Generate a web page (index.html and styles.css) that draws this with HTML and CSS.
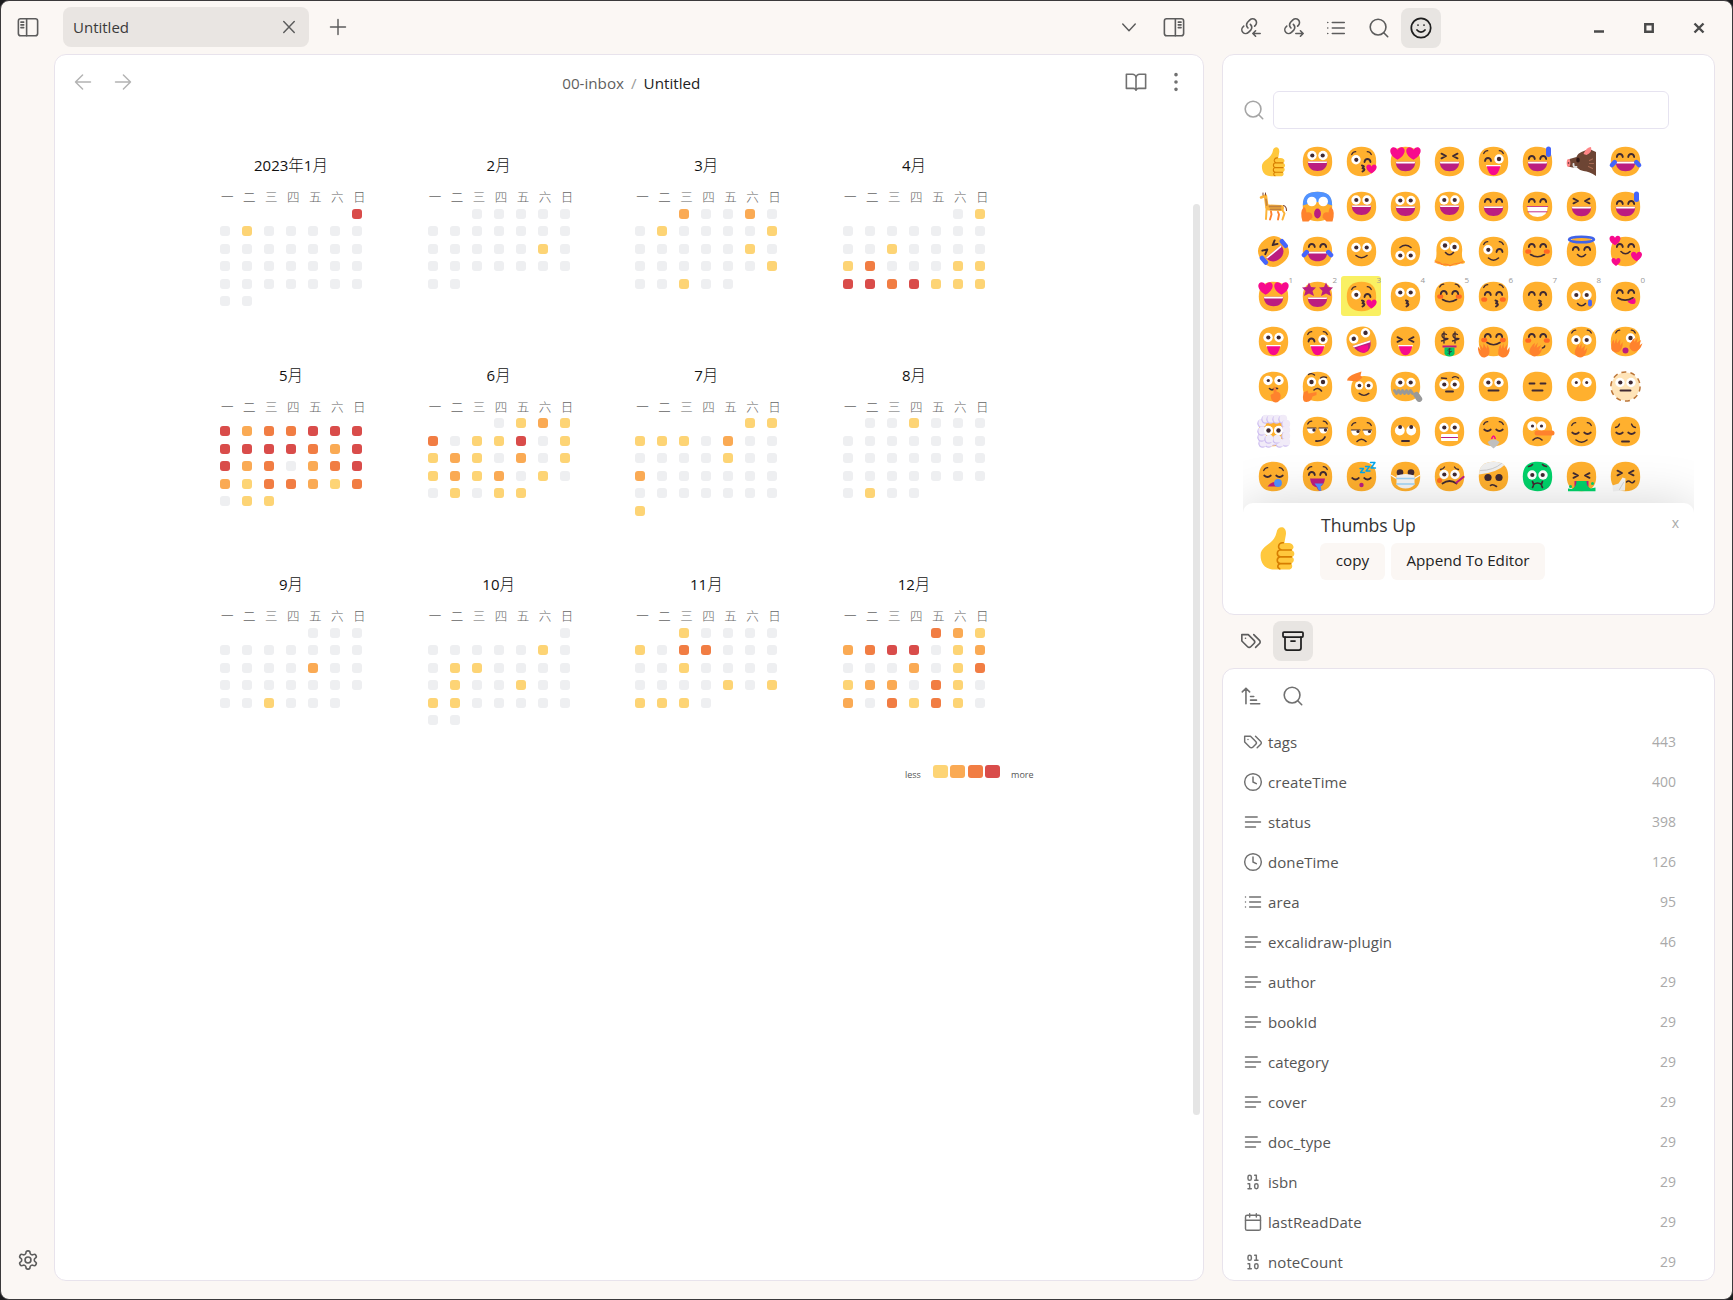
FILE: index.html
```html
<!DOCTYPE html>
<html lang="en">
<head>
<meta charset="utf-8">
<title>Untitled</title>
<link rel="stylesheet" href="styles.css">
</head>
<body>
<svg class="sprite" width="0" height="0">
  <symbol id="i-search" viewBox="0 0 24 24"><circle cx="11" cy="11" r="8.6"/><path d="m21.5 21.5-4.3-4.3"/></symbol>
  <symbol id="i-tags" viewBox="0 0 24 24"><path d="M9 5H2v7l6.29 6.29c.94.94 2.48.94 3.42 0l3.58-3.58c.94-.94.94-2.48 0-3.42L9 5Z"/><path d="M6 9.01V9"/><path d="m15 5 6.3 6.3a2.4 2.4 0 0 1 0 3.4L17 19"/></symbol>
  <symbol id="i-clock" viewBox="0 0 24 24"><circle cx="12" cy="12" r="10"/><path d="M12 6v6l4 2"/></symbol>
  <symbol id="i-text" viewBox="0 0 24 24"><path d="M17 6H3M21 12H3M15 18H3"/></symbol>
  <symbol id="i-list" viewBox="0 0 24 24"><path d="M8 6h13M8 12h13M8 18h13M3 6h.01M3 12h.01M3 18h.01"/></symbol>
  <symbol id="i-binary" viewBox="0 0 24 24"><rect x="14" y="14" width="4" height="6" rx="2"/><rect x="6" y="4" width="4" height="6" rx="2"/><path d="M6 20h4M14 10h4M6 14h2v6M14 4h2v6"/></symbol>
  <symbol id="i-calendar" viewBox="0 0 24 24"><rect x="3" y="4" width="18" height="18" rx="2"/><path d="M16 2v4M8 2v4M3 10h18"/></symbol>
  <symbol id="i-link" viewBox="0 0 24 24"><path d="M8.7 12a4.9 4.9 0 0 1-.45-6.3l2.55-2.52a4.2 4.2 0 0 1 6 5.92l-.9.9"/><path d="M11.3 8a4.9 4.9 0 0 1 .45 6.3L9.2 16.82a4.2 4.2 0 0 1-6-5.92l.9-.9"/></symbol>
</svg>

<div class="window">
  <aside class="ribbon">
    <svg class="icon ic22" viewBox="0 0 24 24"><rect x="1.5" y="3" width="21" height="18.5" rx="2.5"/><path d="M10.5 3v18.5M4.3 6.7h3M4.3 9.7h3M4.3 12.7h3"/></svg>
    <svg class="icon ic22" viewBox="0 0 24 24"><path d="M12.22 2h-.44a2 2 0 0 0-2 2v.18a2 2 0 0 1-1 1.73l-.43.25a2 2 0 0 1-2 0l-.15-.08a2 2 0 0 0-2.73.73l-.22.38a2 2 0 0 0 .73 2.73l.15.1a2 2 0 0 1 1 1.72v.51a2 2 0 0 1-1 1.74l-.15.09a2 2 0 0 0-.73 2.73l.22.38a2 2 0 0 0 2.73.73l.15-.08a2 2 0 0 1 2 0l.43.25a2 2 0 0 1 1 1.73V20a2 2 0 0 0 2 2h.44a2 2 0 0 0 2-2v-.18a2 2 0 0 1 1-1.73l.43-.25a2 2 0 0 1 2 0l.15.08a2 2 0 0 0 2.73-.73l.22-.39a2 2 0 0 0-.73-2.73l-.15-.08a2 2 0 0 1-1-1.74v-.5a2 2 0 0 1 1-1.74l.15-.09a2 2 0 0 0 .73-2.73l-.22-.38a2 2 0 0 0-2.73-.73l-.15.08a2 2 0 0 1-2 0l-.43-.25a2 2 0 0 1-1-1.73V4a2 2 0 0 0-2-2z"/><circle cx="12" cy="12" r="3.2"/></svg>
  </aside>

  <main class="center">
    <div class="tabbar">
      <div class="tab"><span>Untitled</span><svg class="icon ic20" viewBox="0 0 24 24"><path d="M18.3 5.5 5.7 18.5M5.7 5.5l12.6 13"/></svg></div>
      <svg class="icon ic20 plus" viewBox="0 0 24 24"><path d="M12 3v18M3 12h18"/></svg>
      <svg class="icon ic20 chev" viewBox="0 0 24 24"><path d="m4.5 8.5 7.5 8 7.5-8"/></svg>
      <svg class="icon ic22" viewBox="0 0 24 24"><rect x="1.5" y="3" width="21" height="18.5" rx="2.5"/><path d="M13.5 3v18.5M16.7 6.7h3M16.7 9.7h3M16.7 12.7h3"/></svg>
    </div>
    <section class="panel note">
      <header class="note-head">
        <svg class="icon ic20 faint" viewBox="0 0 24 24"><path d="M11.5 3.5 3 12l8.5 8.5M21 12H3"/></svg>
        <svg class="icon ic20 faint" viewBox="0 0 24 24"><path d="m12.5 3.5 8.5 8.5-8.5 8.5M3 12h18"/></svg>
        <div class="crumbs"><span class="dir">00-inbox</span><span class="sep">/</span><span>Untitled</span></div>
        <svg class="icon ic22 mid" viewBox="0 0 24 24"><path d="M1.5 3.5H8a4 4 0 0 1 4 4V21a3 3 0 0 0-3-2H1.5zM22.500 3.500H16a4 4 0 0 0-4 4V21a3 3 0 0 1 3-2h7.500z"/></svg>
        <svg class="icon ic22 mid dots" viewBox="0 0 24 24"><circle cx="12" cy="12" r="1.100"/><circle cx="12" cy="4" r="1.100"/><circle cx="12" cy="20" r="1.100"/></svg>
      </header>
      <div class="note-body">
        <div class="year" id="year"></div>
        <div class="scroll"></div>
      </div>
      <div class="legend"><span>less</span><div class="keys"><i class="l1"></i><i class="l2"></i><i class="l3"></i><i class="l4"></i></div><span>more</span></div>
    </section>
  </main>

  <aside class="side">
    <div class="sidebar-tabs">
      <div class="btn"><svg class="icon ic22" viewBox="0 0 24 24"><use href="#i-link"/><path d="m17 21-3-3 3-3M22 18h-8"/></svg></div>
      <div class="btn"><svg class="icon ic22" viewBox="0 0 24 24"><use href="#i-link"/><path d="m19 15 3 3-3 3M14 18h8"/></svg></div>
      <div class="btn"><svg class="icon ic22"><use href="#i-list"/></svg></div>
      <div class="btn"><svg class="icon ic22"><use href="#i-search"/></svg></div>
      <div class="btn on"><svg class="icon ic24" viewBox="0 0 24 24"><circle cx="12" cy="12" r="9.700"/><path d="M8 14s1.500 2 4 2 4-2 4-2M9 9h.01M15 9h.01"/></svg></div>
      <div class="wincontrols">
        <svg width="12" height="12" viewBox="0 0 12 12"><path d="M1 9.500h10"/></svg>
        <svg width="12" height="12" viewBox="0 0 12 12"><path d="M2.250 2.250h7.500v7.500h-7.500z"/></svg>
        <svg width="12" height="12" viewBox="0 0 12 12"><path d="m1.500 1.500 9 9M10.500 1.500l-9 9"/></svg>
      </div>
    </div>

    <section class="panel picker">
      <div class="search"><svg class="icon ic22"><use href="#i-search"/></svg><div class="field"></div></div>
      <div class="picker-body">
        <div class="emojis" id="emojis"></div>
        <div class="detail">
          <svg class="thumb" id="thumb" viewBox="-12 -15 24 30"></svg>
          <div class="detail-main">
            <div class="name">Thumbs Up</div>
            <div class="actions"><button>copy</button><button class="wide">Append To Editor</button></div>
          </div>
          <span class="close">x</span>
        </div>
      </div>
    </section>

    <div class="sidebar-tabs low">
      <div class="btn"><svg class="icon ic22"><use href="#i-tags"/></svg></div>
      <div class="btn on"><svg class="icon ic24" viewBox="0 0 24 24"><rect x="2" y="3" width="20" height="5" rx="1"/><path d="M4 8v11a2 2 0 0 0 2 2h12a2 2 0 0 0 2-2V8M10 12h4"/></svg></div>
    </div>

    <section class="panel props">
      <div class="props-tools">
        <svg class="icon ic22 mid" viewBox="0 0 24 24"><path d="m2.500 7.500 4-4 4 4M6.500 3.500v17M11.500 12.500h3.500M11.500 16.500h6.500M11.500 20.500h10"/></svg>
        <svg class="icon ic22 mid"><use href="#i-search"/></svg>
      </div>
      <div class="row"><svg class="icon ic20 mid"><use href="#i-tags"/></svg><span>tags</span><b>443</b></div>
      <div class="row"><svg class="icon ic20 mid"><use href="#i-clock"/></svg><span>createTime</span><b>400</b></div>
      <div class="row"><svg class="icon ic20 mid"><use href="#i-text"/></svg><span>status</span><b>398</b></div>
      <div class="row"><svg class="icon ic20 mid"><use href="#i-clock"/></svg><span>doneTime</span><b>126</b></div>
      <div class="row"><svg class="icon ic20 mid"><use href="#i-list"/></svg><span>area</span><b>95</b></div>
      <div class="row"><svg class="icon ic20 mid"><use href="#i-text"/></svg><span>excalidraw-plugin</span><b>46</b></div>
      <div class="row"><svg class="icon ic20 mid"><use href="#i-text"/></svg><span>author</span><b>29</b></div>
      <div class="row"><svg class="icon ic20 mid"><use href="#i-text"/></svg><span>bookId</span><b>29</b></div>
      <div class="row"><svg class="icon ic20 mid"><use href="#i-text"/></svg><span>category</span><b>29</b></div>
      <div class="row"><svg class="icon ic20 mid"><use href="#i-text"/></svg><span>cover</span><b>29</b></div>
      <div class="row"><svg class="icon ic20 mid"><use href="#i-text"/></svg><span>doc_type</span><b>29</b></div>
      <div class="row"><svg class="icon ic20 mid"><use href="#i-binary"/></svg><span>isbn</span><b>29</b></div>
      <div class="row"><svg class="icon ic20 mid"><use href="#i-calendar"/></svg><span>lastReadDate</span><b>29</b></div>
      <div class="row"><svg class="icon ic20 mid"><use href="#i-binary"/></svg><span>noteCount</span><b>29</b></div>
    </section>
  </aside>
</div>
<script src="app.js"></script>
</body>
</html>
```

FILE: styles.css
```css
* { box-sizing: border-box; }
body { margin: 0; background: #1c1c1e; font-family: "Open Sans", "Noto Sans CJK SC", sans-serif; font-size: 15px; color: #222; overflow: hidden; }
.sprite { display: block; height: 0; }
.window { width: 1733px; height: 1300px; border: 1px solid #3b393b; border-radius: 9px; background: #fbf7f4; display: flex; padding: 0 17px 18px 0; overflow: hidden; }
.icon { fill: none; stroke: #5c5c5c; stroke-width: 1.75; stroke-linecap: round; stroke-linejoin: round; flex: none; display: block; }
.ic20 { width: 20px; height: 20px; }
.ic22 { width: 22px; height: 22px; }
.ic24 { width: 24px; height: 24px; }
.mid { stroke: #707070; }
.faint { stroke: #b3b3b3; }

.ribbon { width: 53px; padding: 15px 0 10px 15.500px; display: flex; flex-direction: column; justify-content: space-between; }
.center { width: 1150px; display: flex; flex-direction: column; }
.tabbar { height: 53px; display: flex; align-items: center; padding: 0 19px 2px 9px; }
.tab { width: 246px; height: 40px; margin-top: 1px; border-radius: 8px; background: #e9e5e2; display: flex; align-items: center; justify-content: space-between; padding: 0 10px; color: #3a3a3a; }
.plus { margin-left: 18.500px; }
.chev { margin-left: auto; margin-right: 24px; }

.panel { background: #fff; border: 1px solid #e8e3ec; border-radius: 12px; overflow: hidden; }
.note { flex: 1; }
.note-head { height: 56px; display: flex; align-items: center; padding: 0 16px 2px 17.500px; gap: 20px; }
.crumbs { flex: 1; display: flex; justify-content: center; gap: 7px; padding: 2px 0 0 5px; font-size: 15.200px; }
.crumbs .dir { color: #5f5f5f; }
.crumbs .sep { color: #9a9a9a; }
.dots { margin-left: -2px; }
.dots circle { fill: #707070; }
.note-body { height: 640px; display: flex; justify-content: space-between; padding: 41.2px 3px 0 159px; }
.year { display: grid; grid-template-columns: repeat(4, 154px); grid-auto-rows: 209.5px; column-gap: 53.67px; }
.month h3 { margin: 0; height: 35px; padding-top: 1px; line-height: 25px; font-size: 15.5px; font-weight: 300; text-align: center; color: #111; white-space: nowrap; }
.month h3 span { font-weight: 400; font-size: 15px; }
.week, .days { display: grid; grid-template-columns: repeat(7, 22px); }
.week { height: 17.800px; line-height: 20px; font-family: "Noto Sans CJK SC", sans-serif; font-weight: 300; font-size: 12.500px; color: #666; text-align: center; padding-left: 2.300px; }
.days { grid-auto-rows: 17.500px; place-items: center; }
.days.late { padding-top: 7.800px; }
.days i { width: 10px; height: 10px; border-radius: 3px; }
.l0 { background: #eeeff1; }
.l1 { background: #fdd475; }
.l2 { background: #faaa54; }
.l3 { background: #f17d43; }
.l4 { background: #d94c4a; }
.scroll { width: 7px; height: 911px; margin-top: 51.800px; border-radius: 4px; background: #e5e5e5; }
.legend { display: flex; align-items: flex-start; font-size: 9px; line-height: 12px; color: #555; padding-left: 850px; margin-top: 14px; }
.legend .keys { display: flex; gap: 2.400px; margin: 0 11px 0 12px; }
.legend i { width: 15px; height: 13px; border-radius: 3px; }
.legend span { padding-top: 4px; }

.side { width: 493px; margin-left: 18px; display: flex; flex-direction: column; }
.sidebar-tabs { height: 53px; display: flex; align-items: flex-start; padding: 7px 0 0 9px; gap: 2.600px; }
.btn { width: 40px; height: 40px; border-radius: 8px; display: flex; align-items: center; justify-content: center; }
.btn.on { background: #e8e5e2; }
.btn.on .icon { stroke: #1f1f1f; }
.wincontrols { margin: 14px 10px 0 auto; display: flex; gap: 38px; }
.wincontrols svg { fill: none; stroke: #4a4a4a; stroke-width: 2.400; display: block; }

.picker { height: 561px; padding-top: 36px; }
.search { display: flex; align-items: center; gap: 8px; padding-left: 20px; }
.search .icon { stroke: #a5a5a5; }
.field { width: 396px; height: 38px; border: 1px solid #e6e3f0; border-radius: 6px; }
.picker-body { width: 451px; margin-left: 20px; height: 485px; overflow: hidden; padding-top: 12px; }
.emojis { display: grid; grid-template-columns: repeat(9, 40px); grid-auto-rows: 40px; gap: 5px 4px; padding-left: 10px; }
.emoji { position: relative; border-radius: 3px; width: 40px; height: 40px; }
.emoji svg { width: 40px; height: 40px; display: block; }
.emoji.sel { background: #f9f063; }
.emoji small { position: absolute; right: 0; top: -1px; font-size: 8px; line-height: 9px; color: #999; }
.detail { position: relative; height: 130px; margin-top: 7px; background: #fff; border-radius: 10px 10px 0 0; box-shadow: 0 0 50px rgba(0, 0, 0, .17); display: flex; }
.thumb { width: 35px; height: 44px; margin: 23px 0 0 17px; }
.detail-main { margin-left: 25px; padding-top: 8px; }
.name { font-size: 17.600px; line-height: 28px; color: #333; padding-left: 1px; }
.actions { display: flex; gap: 6px; margin-top: 4px; }
button { width: 65px; height: 37px; border: 0; border-radius: 6px; background: #fbf7f4; font: 15.200px "Open Sans", sans-serif; color: #222; padding: 0 0 4px; }
button.wide { width: 154px; }
.close { margin: 10px 15px 0 auto; color: #aaa; font-size: 14px; line-height: 20px; }

.sidebar-tabs.low { height: 53px; padding: 6px 0 0 8.500px; }
.props { flex: 1; }
.props-tools { height: 53px; display: flex; align-items: center; gap: 20px; padding: 1px 0 0 17px; }
.row { height: 40px; display: flex; align-items: center; padding: 0 38px 0 20px; color: #555; }
.row span { margin-left: 5px; letter-spacing: .08px; }
.row b { margin-left: auto; font-weight: 400; color: #a9a9a9; font-size: 14px; padding-bottom: 2px; }
```

FILE: app.js
```js
// Activity calendar: one string per week, digit = level, dot = outside the month
const months = [
  ['<span>2023</span>年<span>1</span>月', '......4 0100000 0000000 0000000 0000000 00'],
  ['<span>2</span>月', '..00000 0000000 0000010 0000000 00'],
  ['<span>3</span>月', '..20020 0100001 0000010 0000001 00100'],
  ['<span>4</span>月', '.....01 0000000 0010000 1300011 4434111'],
  ['<span>5</span>月', '4233444 4444324 4230234 2133213 011'],
  ['<span>6</span>月', '...0121 3011401 1210201 1212010 01011'],
  ['<span>7</span>月', '.....11 1110200 0000100 2000000 0000000 1'],
  ['<span>8</span>月', '.001000 0000000 0000000 0000000 0100'],
  ['<span>9</span>月', '....000 0000000 0000200 0000000 001000'],
  ['<span>10</span>月', '......0 0000010 0110000 0100100 1100000 00'],
  ['<span>11</span>月', '..10000 1033000 0010000 0000101 1110'],
  ['<span>12</span>月', '....321 2344012 0002013 1220310 2031310'],
];
document.getElementById('year').innerHTML = months.map(([name, data]) =>
  `<div class="month"><h3>${name}</h3><div class="week">${[...'一二三四五六日'].map(d => `<span>${d}</span>`).join('')}</div>` +
  `<div class="days${data[0] !== '.' ? ' late' : ''}">${[...data.replace(/ /g, '')].map(c => c === '.' ? '<i></i>' : `<i class="l${c}"></i>`).join('')}</div></div>`
).join('');

// Emoji drawing helpers; origin is the centre of the face
const D = '#402a32', M = '#bb1d80', P = '#f70a8d', B = '#4565fb', H = '#ff822d', W = '#fff', Y = '#ffb02e';
const f = (d, c) => `<path d="${d}" fill="${c}"/>`;
const s = (d, w = 1.6, c = D) => `<path d="${d}" fill="none" stroke="${c}" stroke-width="${w}" stroke-linecap="round" stroke-linejoin="round"/>`;
const c = (x, y, r, k) => `<circle cx="${x}" cy="${y}" r="${r}" fill="${k}"/>`;
const el = (x, y, rx, ry, k) => `<ellipse cx="${x}" cy="${y}" rx="${rx}" ry="${ry}" fill="${k}"/>`;
const g = (t, x) => `<g transform="${t}">${x}</g>`;
const face = (k = Y) => f('M0-14.700C9.700-14.700 14.700-9.700 14.700 0S9.700 14.700 0 14.700-14.700 9.700-14.700 0-9.700-14.700 0-14.700Z', k);
const eye = (x, y, r = 4.7, p = 2.2, dx = 0, dy = 0) => c(x, y, r, W) + c(x + dx, y + dy, p, D);
const E = (y = -6, p = 2.1) => eye(-5.5, y, 4.7, p, .3) + eye(5.5, y, 4.7, p, -.3);
const up = (x, y) => s(`M${x - 3} ${y + 1.5}q.5-3 3-3t3 3`, 1.8);
const dn = (x, y) => s(`M${x - 3.3} ${y}q3.300 3 6.600 0`, 1.7);
const A = (y = -6) => up(-5.7, y) + up(5.7, y);
const C = (y = 0) => dn(-6, y) + dn(6, y);
const X = (y = -5.5) => s(`M-8 ${y - 2.3}l4.500 2.300-4.500 2.300M8 ${y - 2.3}l-4.500 2.300 4.500 2.300`, 1.9);
const big = (y = 0) => f(`M-9.700 ${y}h19.400c0 6.300-4 9.500-9.700 9.500s-9.700-3.200-9.700-9.500z`, M) + f(`M-9.700 ${y}h19.400l-.6 1.600h-18.200z`, W);
const smile = (y = 4, w = 5.5) => s(`M${-w} ${y}q${w} 4.500 ${2 * w} 0`);
const tongue = (y = 3.5) => f(`M-7.500 ${y}h15l-.8 2h-13.400z`, W) + f(`M-6.700 ${y + 1.3}h13.400q-1.700 9-6.700 9t-6.700-9z`, P);
const heart = (x, y, k = 1, col = P) => g(`translate(${x} ${y}) scale(${k})`, f('M0 6C-9 1-8-6-3.500-6Q-1-6 0-3.500Q1-6 3.500-6C8-6 9 1 0 6z', col));
const kiss = (x = 1) => s(`M${x - .5} 4q3.500.6.500 2.700q3.800.7 0 3.300`, 2);
const brow = (y = -10.5) => s(`M-9.800 ${y + 2}q1.500-2.800 4-2.800M9.800 ${y + 2}q-1.500-2.800-4-2.800`, 1.3);
const sad = (y = 7, w = 4.5) => s(`M${-w} ${y}q${w}-4.500 ${2 * w} 0`);
const blush = y => el(-9.3, y, 3, 2.3, '#ff6723') + el(9.3, y, 3, 2.3, '#ff6723');
const line = (y = 4, w = 5) => s(`M${-w} ${y}h${2 * w}`, 1.9);
const drop = s('M11-12.500v5.500', 5, B);
const tears = s('M-13.500 3.500l2.700-2.800M13.500 3.500l-2.700-2.800', 4.6, B);
const thumb = f('M-11.600 5C-11.600-2-2.500-2-.7-10.500C0-15.800 6.800-15.500 5.700-9L4.700-3.500H7c4.500 0 5 4 2.500 4.900c3 1.100 2.300 4.200.5 4.700c2 1 1.300 4-.5 4.500c1.500 2.500 0 4.200-2.300 4.200H-2c-6.600 0-9.600-4-9.600-9.800z', '#ffc83d') +
  s('M4-3.600C.5-4-.5.500 2.500 1.200C-1 1.500-.8 5.800 2 6C-1 6.500-.8 10.500 2 10.700C0 11-.5 13.500 1.500 14.300M2.500 1.400h7M2 6.100h7.500M2 10.700h7', 1.1, '#d67d00');
const wink = eye(-5.5, -1.7, 4.7, 2.1, .3) + up(6, -1) + brow(-9);
const hand = (x, y, r = 0) => g(`translate(${x} ${y}) rotate(${r})`, f('M-5-3Q-6 7 0 7T6-1L5-5 3.500-1 2-7 0-2-2-7-2.500-1-4-5z', H));
const kissFace = face() + wink + kiss(1) + heart(10, 7.5, .75);
const loveEyes = face() + heart(-8, -8, 1.05) + heart(8, -8, 1.05) + big(.3);
const cloud = pts => pts.map(p => c(p[0], p[1], 4.2, '#cdbdf0') + c(p[0] + .8, p[1] - .8, 3.9, '#f1ebf8')).join('');

const emojis = [
  thumb,
  face() + E() + big(),
  kissFace,
  loveEyes,
  face() + X() + big(.3),
  face() + up(-5.5, -2) + brow(-10) + eye(5.5, -2.5) + tongue(3.5),
  face() + A(-4) + big(.3) + drop,
  f('M14.500-9.500L9-12Q4-12 0-9.500Q-4-8-5-4.500L-12-2.500-13.500 5-9 6-4 6.500Q-1 9.500 2 9.500Q8 10 14.500 14.500z', '#6d4534') + el(-13, 1.5, 1.8, 4, '#ff8687') + c(-13, 1.5, .8, D) + el(-3.5, -1.5, 1.8, 2.6, '#321b18') + f('M2-7.500Q5-14.500 9.500-14.500Q11-9 5-6.500z', '#ff8687') + s('M-8 2.500Q-8.500 6-5 5.500', 1.9, '#ddd') + s('M8-1l3-1.500M8 2h4M7 5l4 2', 1.2, '#a56953'),
  face() + A(-6) + big(.3) + tears,

  s('M-8-10.500L-6.500 1', 3.4, '#fcb43a') + s('M-12.500-9l3.500-1.500', 2.6, '#fcb43a') + s('M-5 1L7.500 1.500', 6, '#fcb43a') + s('M-7 3l-.5 9.500M8.500 3l2.500 4-2 6', 2, '#fcb43a') + s('M-2.500 5l.5 3-1.500 5M4.500 5.500l1 2.500-1 5', 1.9, H) + s('M-7.500-7l.8 5.500', 1.8, '#c8863c') + s('M-4 0H7M-3 2.800H7', 1.8, '#c08140') + s('M-10.500-13.500v2M-8-13.500v2', 1, '#7d4533') + s('M10-1q3 1 3 5', 1.1, '#7d4533'),
  face() + f('M-14.700-1C-14.700-11-10-14.700 0-14.700S14.700-11 14.700-1L8-3Q0-6-8-3z', '#5092ff') + c(-5.7, -5, 4.8, W) + c(5.7, -5, 4.8, W) + el(0, 7, 3.4, 5, M) + f('M-15 15Q-18 5-14 1Q-12 0-11 6Q-5 5-5 11L-9 15z', H) + f('M15 15Q18 5 14 1Q12 0 11 6Q5 5 5 11L9 15z', H),
  face() + E(-6.5) + big(-1), face() + E() + big(), face() + E(-6.5) + big(-1), face() + A() + big(),
  face() + A() + f('M-10.200 0h20.400q0 10.500-10.200 10.500t-10.200-10.500z', W) + s('M-9.500 5.300h19', .9, M) + s('M-10.200 0h20.400', .8, M),
  face() + X() + big(.3), face() + A(-4) + big(.3) + drop,

  g('rotate(-40)', face() + X() + big() + s('M-13 3.500v-6M13 3.500v-6', 4.500, B)),
  face() + A() + big(.3) + tears,
  face() + E(-4) + smile(),
  face() + g('rotate(180)', E(-4) + smile()),
  f('M-13 1C-14-10-8-14.700 0-14.700S14-9 12.500 1Q12 8 15.500 10Q16 13 11 12Q5 15 0 14Q-5 16-8 13Q-14 13-15 9Q-13 8-13 1z', Y) + s('M-14.500 10.500q4-1 7 2.500q5-1 8 1.300q5-3 9-2.500l4-1.500', 1.2, H) + eye(-4.5, -6) + eye(5, -4.5) + smile(1, 4),
  face() + wink + smile(6.5, 5),
  face() + blush(0) + A() + smile(3, 7),
  face() + A(-3) + smile(3, 4) + '<ellipse cy="-12" rx="12.500" ry="2.800" fill="none" stroke="#4163e8" stroke-width="2.400"/>',
  face() + A() + smile(0, 4.500) + heart(-10.500, -11, .8) + heart(11, 5, .8) + heart(-9.500, 10.500, .65),

  loveEyes,
  face() + ['-8.500', '8.500'].map(x => g(`translate(${x} -7)`, f('M0-7L2-2.500 7-2 3.500 1.500 5 6.500 0 4-5 6.500-3.500 1.500-7-2-2-2.500z', M))).join('') + big(1),
  kissFace,
  face() + E(-4) + kiss(),
  face() + blush(0) + A(-4) + brow(-11.5) + smile(3, 7),
  face() + blush(3) + A(-3) + brow(-11) + kiss(2.5),
  face() + A(-3) + kiss(2),
  face() + E(-1.5) + smile(7, 4) + s('M8.500 5v3', 3.8, B),
  face() + A(-5) + f('M2 4.500l7.500-3Q11.500 8 7 7.500Q3 7 2 4.500z', P) + s('M-7.500 1.500q7 4.500 15-.2', 1.700),

  face() + E(-4) + tongue(),
  face() + up(-6, -1.5) + brow(-9) + eye(5.5, -2) + tongue(),
  g('rotate(-18)', face() + eye(-6.5, -5) + eye(6.5, -7) + f('M-10 1.500h19q-2 10-8.500 10t-10.500-10z', M) + f('M-10 1.500h19l-1 2h-17z', W) + f('M-6 5q4-2 11 .5-1 6-5 6t-6-6.500z', P)),
  face() + X(-2) + tongue(),
  face() + ['-5.500', '5.500'].map(x => g(`translate(${x} -4)`, s('M2.500-3Q-2-5-2-2T2.500 1T-2.500 3.500M0-5.500V5.500', 1.3))).join('') + f('M-7 4h14v2h-14z', M) + f('M-5 6h10v6q-1 3-5 3t-5-3z', '#00c767') + s('M1.500 7.500Q-2 7-1.500 9t3 1-3 2M0 7v6', .8),
  face() + blush(-1.5) + A() + smile(1, 6.500) + hand(-10, 9, -15) + hand(10, 9, 15),
  face() + blush(-1) + A() + s('M5 6.500q2-.5 2.200-2') + hand(-2, 8, 35),
  face() + E(-1.5) + brow(-10.5) + hand(-1, 9, 25),
  face() + brow(-10.5) + eye(5, -3.500) + c(0, 9, 3, M) + hand(-9, 4, 15) + hand(10, 3, 35),

  face() + eye(-5.500, -6, 4.7, 1.600, .3) + eye(5.500, -6, 4.7, 1.600) + s('M-4 2q2 2 4 .8t4-.8') + f('M0 0Q3 0 3 5Q8 6 7 11Q6 16 2 16T-3 9Q-2 7 0 7z', H),
  face() + eye(-6, -4.500) + eye(5.500, -4.500) + s('M-9-12q3-2 6 .5M3-8.500q3-2 6-.500', 1.4) + s('M-3.500 3.500q4-3.500 7.500 1') + f('M-14 6l4-2 1 3 8-1.500v3l-4 1.500Q-6 15-11 15.500T-14 6z', H),
  g('translate(2.500 2.500) scale(.88)', face() + E(-4) + smile(5)) + f('M-14.500-6Q-14-10-6-13L0-15-1-11 1-9-4-5z', H),
  face() + E(-4) + s('M-11 4l2 3 2-3 2 3 2-3 2 3 2-3 2 3 2-3 2 3', 3, '#999') + g('rotate(-35 12 10)', s('M12 8v5', 6, '#999')),
  face() + E(-2) + s('M-8-8.500l5 .5M3-9q3-2 6 .5', 1.4) + line(5, 3.500),
  face() + E(-4) + line(),
  face() + s('M-8-3h5M3-3h5', 1.8) + line(),
  face() + E(-4, 1.500),
  c(0, 0, 14, '#ffe4b8') + '<circle r="14.600" fill="none" stroke="#bc7536" stroke-width="1.500" stroke-dasharray="5 4.170"/>' + E(-4) + line(),

  face() + E(-1) + cloud([[-12, -8], [-8, -12], [-3, -12], [3, -12], [9, -12], [12, -7], [12, -1], [12, 5], [12, 11], [6, 12], [0, 10], [-5, 12], [-11, 12], [-12, 6], [-12, 0], [3, 8], [-5, 8]]) + eye(-5, -1, 4.5) + eye(5, -1, 4.5),
  face() + brow(-9.5) + f('M-10.500-3.500h9Q-2 2-6 2T-10.500-3.500zM1.500-3.500h9Q10 2 6 2T1.500-3.500z', W) + s('M-10-3.500h8.500M1.500-3.500h8.500', 1.2) + c(-3.5, -1.5, 1.7, D) + c(8, -1.5, 1.7, D) + s('M-1.500 9.500q7 .5 9-4', 1.800),
  face() + brow(-8) + f('M-10.500-1.500h9Q-2 4-6 4T-10.500-1.500zM1.500-1.500h9Q10 4 6 4T1.500-1.500z', W) + s('M-10-1.500h8.500M1.500-1.500h8.500', 1.2) + c(-3.5, 0, 1.6, D) + c(8, 0, 1.6, D) + sad(10),
  face() + eye(-5.7, -1, 4.9, 2, .3, -3.500) + eye(5.7, -1, 4.9, 2, 0, -3.500) + line(9.500, 3.500),
  face() + E(-4) + '<rect x="-8.500" y="2.500" width="17" height="7" rx="1" fill="#fff"/>' + s('M-8 6h16', 1, M),
  face() + brow(-9) + C(-2) + s('M-1.700 7q1.700-5 3.400 0', 1.6, P) + f('M-2 8h4l4 2.500-2 3-4 3.500-4-3.500-2-3z', '#bfbfbf'),
  face() + eye(-5.500, -5.500, 4.700, 1.600, .5) + eye(4, -5.500, 4.700, 1.600) + s('M-.5 1.500h15', 5, H) + sad(8.500),
  face() + brow(-8) + C(1) + smile(8.500),
  face() + s('M-10-4q3-.5 4-3.500M10-4q-3-.5-4-3.500', 1.3) + C(1) + line(10, 3.500),

  face() + brow(-8) + C(-1) + f('M-6 10Q-1 4 3 6l2 4z', M) + c(4.5, 6.5, 3.9, '#5092ff'),
  face() + brow(-9) + A(-3) + f('M-7.500 2h15q-1 7-5 8l1 4q-3 1-4-3-6-1-7-9z', M) + f('M-3 7h9l-3 3 1 4q-3 1-4-3z', '#5092ff'),
  face() + C(1.500) + c(0, 8.500, 2.200, M) + s('M-1.500-8h3.500l-3 4h4M4-10h4l-3.500 4.500h4M9-14h4.500l-4 5.500h4.500', 1.400, '#00a6ed'),
  face() + c(-5.500, -4, 3.300, D) + c(5.500, -4, 3.300, D) + s('M-14-1l5 3M14-1l-5 3', 1.3, W) + f('M-9-1Q0-4 9-1v9Q6 12 0 12T-9 8z', '#f4f4f4') + s('M-8.500 2h17M-8.500 7.500h17', 1.700, '#9dd2f5'),
  face() + el(-10, 4, 2.5, 2.5, '#ff6723') + E(-2) + s('M-9-7q3-.5 4-2.500M9-7q-3-.5-4-2.500', 1.3) + s('M-7 7q7-5 14 0', 1.800) + s('M7 6l7-5.500', 2.200, M),
  face() + c(-5.5, 1, 3.6, D) + c(5.500, 1, 3.600, D) + s('M-3 9q2-2 6 1') + f('M-14.500-2C-14.500-10-10-14.700 0-14.700Q8-14.700 11-11.500Q4-4-14.500-2z', '#efefef') + s('M-13-6Q0-6 8-13', 1, '#ccc'),
  face('#00d26a') + E(-1.500) + s('M-9-10q3-.5 4-2M9-10q-3-.5-4-2M-5 5q2 3 0 6M5 5q-2 3 0 6M-4 8q4-3 8 0', 1.6),
  face() + X(-1) + f('M-7 4.500h14v8h-14z', M) + f('M-5 4.500H5Q5 10 9 12l5-1v3.700h-27.500V12l4 .5Q-5 10-5 4.500z', '#00d26a') + c(11, 7, 1.5, '#00d26a') + c(-11, 10, 1.5, '#00d26a'),
  face() + X(-3.500) + s('M1 5.500q2-2 4 0t4-1') + f('M-13 9l6-2 4-6 3 1-.5 12-12 1z', '#f4f4f4') + s('M-6 13l4-7', .9, '#d0d0d0'),
];
const keys = '123456780';
document.getElementById('emojis').innerHTML = emojis.map((e, i) =>
  `<div class="emoji${i === 29 ? ' sel' : ''}"><svg viewBox="-20.500 -20.500 40 40">${e}</svg>${i >= 27 && i < 36 ? `<small>${keys[i - 27]}</small>` : ''}</div>`
).join('');
document.getElementById('thumb').innerHTML = thumb;
```
